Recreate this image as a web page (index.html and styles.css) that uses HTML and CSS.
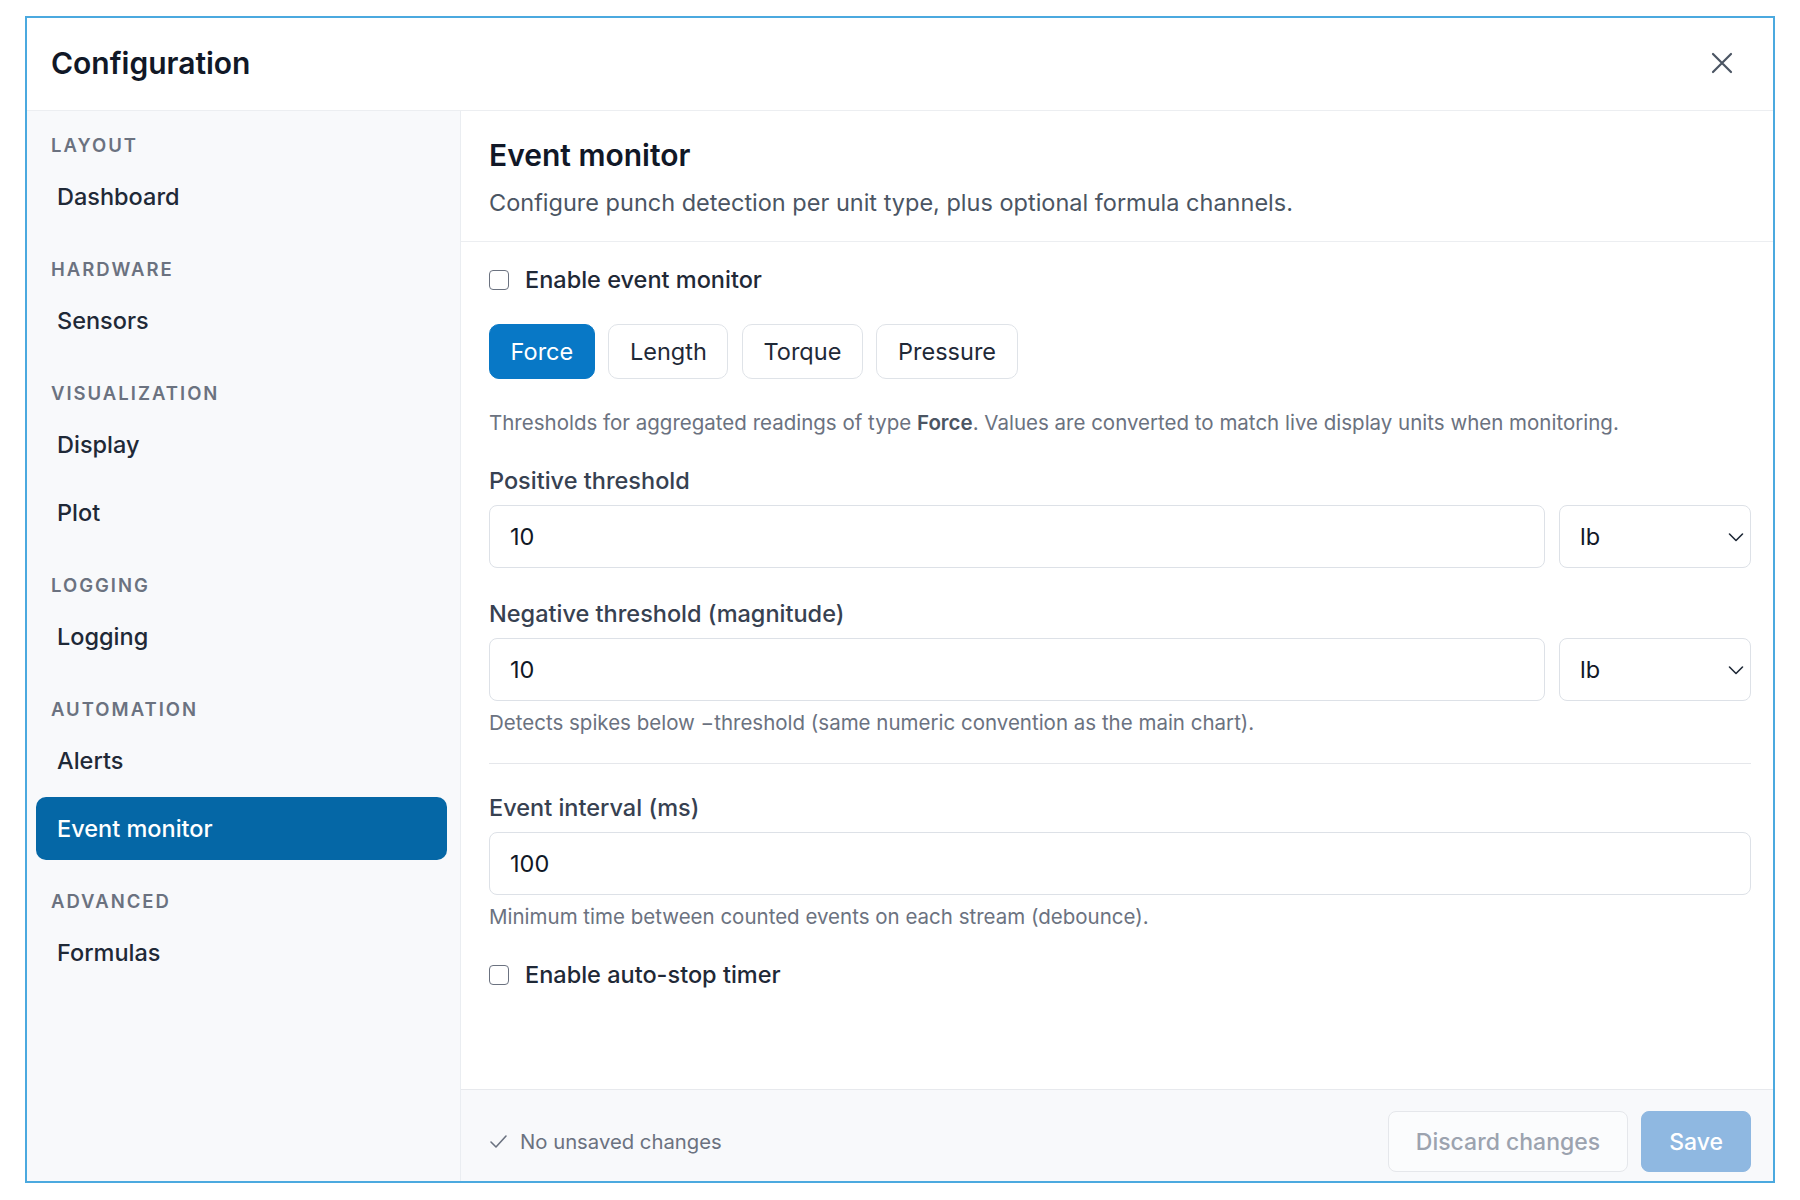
FILE: index.html
```html
<!DOCTYPE html>
<html lang="en">
<head>
    <meta charset="UTF-8">
    <meta name="viewport" content="width=device-width, initial-scale=1.0">
    <title>Configuration</title>
    <link rel="stylesheet" href="styles.css">
</head>
<body>
    <div class="dialog">
        <header class="dialog-header">
            <h2>Configuration</h2>
            <button class="close-btn" aria-label="Close">
                <svg width="22" height="22" viewBox="0 0 22 22" fill="none" stroke="currentColor" stroke-width="2.2" stroke-linecap="round">
                    <path d="M2 2 L20 20 M20 2 L2 20"/>
                </svg>
            </button>
        </header>
        <div class="dialog-body">
            <nav class="sidebar">
                <div class="nav-group">
                    <div class="nav-heading">Layout</div>
                    <a class="nav-item">Dashboard</a>
                </div>
                <div class="nav-group">
                    <div class="nav-heading">Hardware</div>
                    <a class="nav-item">Sensors</a>
                </div>
                <div class="nav-group">
                    <div class="nav-heading">Visualization</div>
                    <a class="nav-item">Display</a>
                    <a class="nav-item">Plot</a>
                </div>
                <div class="nav-group">
                    <div class="nav-heading">Logging</div>
                    <a class="nav-item">Logging</a>
                </div>
                <div class="nav-group">
                    <div class="nav-heading">Automation</div>
                    <a class="nav-item">Alerts</a>
                    <a class="nav-item active">Event monitor</a>
                </div>
                <div class="nav-group">
                    <div class="nav-heading">Advanced</div>
                    <a class="nav-item">Formulas</a>
                </div>
            </nav>
            <main class="panel">
                <div class="panel-head">
                    <h3>Event monitor</h3>
                    <p>Configure punch detection per unit type, plus optional formula channels.</p>
                </div>
                <div class="panel-content">
                    <label class="check">
                        <input type="checkbox">
                        <span>Enable event monitor</span>
                    </label>

                    <div class="unit-tabs">
                        <button class="tab selected">Force</button>
                        <button class="tab">Length</button>
                        <button class="tab">Torque</button>
                        <button class="tab">Pressure</button>
                    </div>

                    <p class="hint hint-lead">Thresholds for aggregated readings of type <b>Force</b>. Values are converted to match live display units when monitoring.</p>

                    <div class="field">
                        <label for="pos">Positive threshold</label>
                        <div class="field-row">
                            <input type="text" id="pos" value="10">
                            <div class="select-wrap">
                                <select>
                                    <option>lb</option>
                                    <option>N</option>
                                    <option>kN</option>
                                </select>
                                <svg class="chevron" width="16" height="10" viewBox="0 0 16 10" fill="none" stroke="currentColor" stroke-width="1.6" stroke-linecap="round" stroke-linejoin="round">
                                    <path d="M1.5 2 L8 8.5 L14.5 2"/>
                                </svg>
                            </div>
                        </div>
                    </div>

                    <div class="field">
                        <label for="neg">Negative threshold (magnitude)</label>
                        <div class="field-row">
                            <input type="text" id="neg" value="10">
                            <div class="select-wrap">
                                <select>
                                    <option>lb</option>
                                    <option>N</option>
                                    <option>kN</option>
                                </select>
                                <svg class="chevron" width="16" height="10" viewBox="0 0 16 10" fill="none" stroke="currentColor" stroke-width="1.6" stroke-linecap="round" stroke-linejoin="round">
                                    <path d="M1.5 2 L8 8.5 L14.5 2"/>
                                </svg>
                            </div>
                        </div>
                        <p class="hint">Detects spikes below &minus;threshold (same numeric convention as the main chart).</p>
                    </div>

                    <hr class="sep">

                    <div class="field">
                        <label for="interval">Event interval (ms)</label>
                        <input type="text" id="interval" value="100">
                        <p class="hint">Minimum time between counted events on each stream (debounce).</p>
                    </div>

                    <label class="check check-last">
                        <input type="checkbox">
                        <span>Enable auto-stop timer</span>
                    </label>
                </div>
                <footer class="panel-foot">
                    <div class="status">
                        <svg width="19" height="15" viewBox="0 0 19 15" fill="none" stroke="currentColor" stroke-width="1.6" stroke-linecap="round" stroke-linejoin="round">
                            <path d="M2 8 L7 13 L17 2"/>
                        </svg>
                        <span>No unsaved changes</span>
                    </div>
                    <div class="actions">
                        <button class="btn btn-ghost" disabled>Discard changes</button>
                        <button class="btn btn-primary" disabled>Save</button>
                    </div>
                </footer>
            </main>
        </div>
    </div>
</body>
</html>
```

FILE: styles.css
```css
* {
    box-sizing: border-box;
}
body {
    margin: 0;
    padding: 16px 25px 17px;
    background-color: #fff;
    font-family: Inter, "Noto Sans", sans-serif;
    color: #1f2937;
}
.dialog {
    height: 1167px;
    border: 2px solid #4ba9df;
    background-color: #fff;
    display: flex;
    flex-direction: column;
}
.dialog-header {
    height: 93px;
    flex-shrink: 0;
    display: flex;
    align-items: center;
    justify-content: space-between;
    padding: 0 40px 3px 24px;
    border-bottom: 1px solid #eceef1;
}
.dialog-header h2 {
    margin: 0;
    font-size: 30px;
    font-weight: 600;
    color: #111827;
}
.close-btn {
    border: none;
    background: none;
    padding: 0;
    color: #4b5563;
    display: flex;
    cursor: pointer;
}
.dialog-body {
    flex: 1;
    display: flex;
    min-height: 0;
}

/* left navigation */
.sidebar {
    width: 434px;
    flex-shrink: 0;
    background-color: #f8f9fb;
    border-right: 1px solid #eaedf1;
    padding: 22px 13px 0 9px;
}
.nav-group {
    display: flex;
    flex-direction: column;
    gap: 5px;
    margin-bottom: 29px;
}
.nav-heading {
    padding-left: 15px;
    font-size: 18.5px;
    line-height: 24px;
    font-weight: 600;
    letter-spacing: 2px;
    text-transform: uppercase;
    color: #6b7280;
    margin-bottom: 3px;
}
.nav-item {
    display: block;
    height: 63px;
    line-height: 63px;
    padding-left: 21px;
    border-radius: 10px;
    font-size: 23.5px;
    font-weight: 500;
    color: #1f2937;
    cursor: pointer;
}
.nav-item.active {
    background-color: #0567a6;
    color: #fff;
}

/* right panel */
.panel {
    flex: 1;
    display: flex;
    flex-direction: column;
    min-width: 0;
}
.panel-head {
    padding: 26px 22px 23px 28px;
    border-bottom: 1px solid #eceef1;
}
.panel-head h3 {
    margin: 0 0 15px;
    font-size: 30px;
    line-height: 36px;
    font-weight: 600;
    color: #111827;
}
.panel-head p {
    margin: 0;
    font-size: 23.5px;
    line-height: 30px;
    color: #4b5563;
}
.panel-content {
    flex: 1;
    padding: 23px 22px 0 28px;
}
.check {
    display: flex;
    align-items: center;
    gap: 16px;
    font-size: 23.5px;
    line-height: 30px;
    font-weight: 500;
    color: #1f2937;
}
.check input {
    appearance: none;
    margin: 0;
    width: 20px;
    height: 20px;
    border: 1.5px solid #6b7280;
    border-radius: 4px;
    background: #fff;
}
.check-last {
    margin-top: 29px;
}
.unit-tabs {
    display: flex;
    gap: 13.5px;
    margin-top: 29px;
}
.tab {
    height: 55px;
    padding: 0 20.6px;
    border: 1px solid #dfe3e8;
    border-radius: 10px;
    background-color: #fff;
    font-family: inherit;
    font-size: 23.5px;
    color: #1f2937;
    cursor: pointer;
}
.tab.selected {
    background-color: #0878c6;
    border-color: #0878c6;
    color: #fff;
}
.hint {
    margin: 8px 0 0;
    font-size: 20.5px;
    line-height: 28px;
    color: #6b7280;
}
.hint b {
    font-weight: 600;
    color: #4b5563;
}
.hint-lead {
    margin-top: 30px;
}
.field {
    margin-top: 31px;
}
.hint-lead + .field {
    margin-top: 29px;
}
.field label {
    display: block;
    font-size: 23.5px;
    line-height: 30px;
    font-weight: 500;
    color: #374151;
    margin-bottom: 9px;
}
.field-row {
    display: flex;
    gap: 14px;
}
.field input {
    flex: 1;
    width: 100%;
    height: 63px;
    padding: 0 20px;
    border: 1px solid #dde1e7;
    border-radius: 8px;
    font-family: inherit;
    font-size: 23.5px;
    color: #111827;
    background: #fff;
}
.select-wrap {
    position: relative;
    width: 192px;
    flex-shrink: 0;
}
.select-wrap select {
    appearance: none;
    width: 100%;
    height: 63px;
    padding: 0 20px;
    border: 1px solid #dde1e7;
    border-radius: 8px;
    font-family: inherit;
    font-size: 23.5px;
    color: #111827;
    background: #fff;
}
.chevron {
    position: absolute;
    right: 7px;
    top: 27px;
    color: #1f2937;
    pointer-events: none;
}
.sep {
    border: none;
    border-top: 1px solid #e5e7eb;
    margin: 26px 0 0;
}
.sep + .field {
    margin-top: 29px;
}

/* footer */
.panel-foot {
    height: 92px;
    flex-shrink: 0;
    display: flex;
    align-items: flex-start;
    justify-content: space-between;
    padding: 21px 22px 0 28px;
    background-color: #f8f9fb;
    border-top: 1px solid #e7e9ed;
}
.status {
    display: flex;
    align-items: center;
    gap: 12px;
    height: 61px;
    font-size: 20.3px;
    color: #6b7280;
}
.actions {
    display: flex;
    gap: 13px;
}
.btn {
    height: 61px;
    padding: 0 27px;
    border-radius: 8px;
    font-family: inherit;
    font-size: 23px;
    font-weight: 500;
}
.btn-ghost {
    background-color: #fbfcfd;
    border: 1px solid #e5e7eb;
    color: #9ca3af;
}
.btn-primary {
    min-width: 108px;
    background-color: #8fb8e1;
    border: 1px solid #8fb8e1;
    color: #fff;
}
```
